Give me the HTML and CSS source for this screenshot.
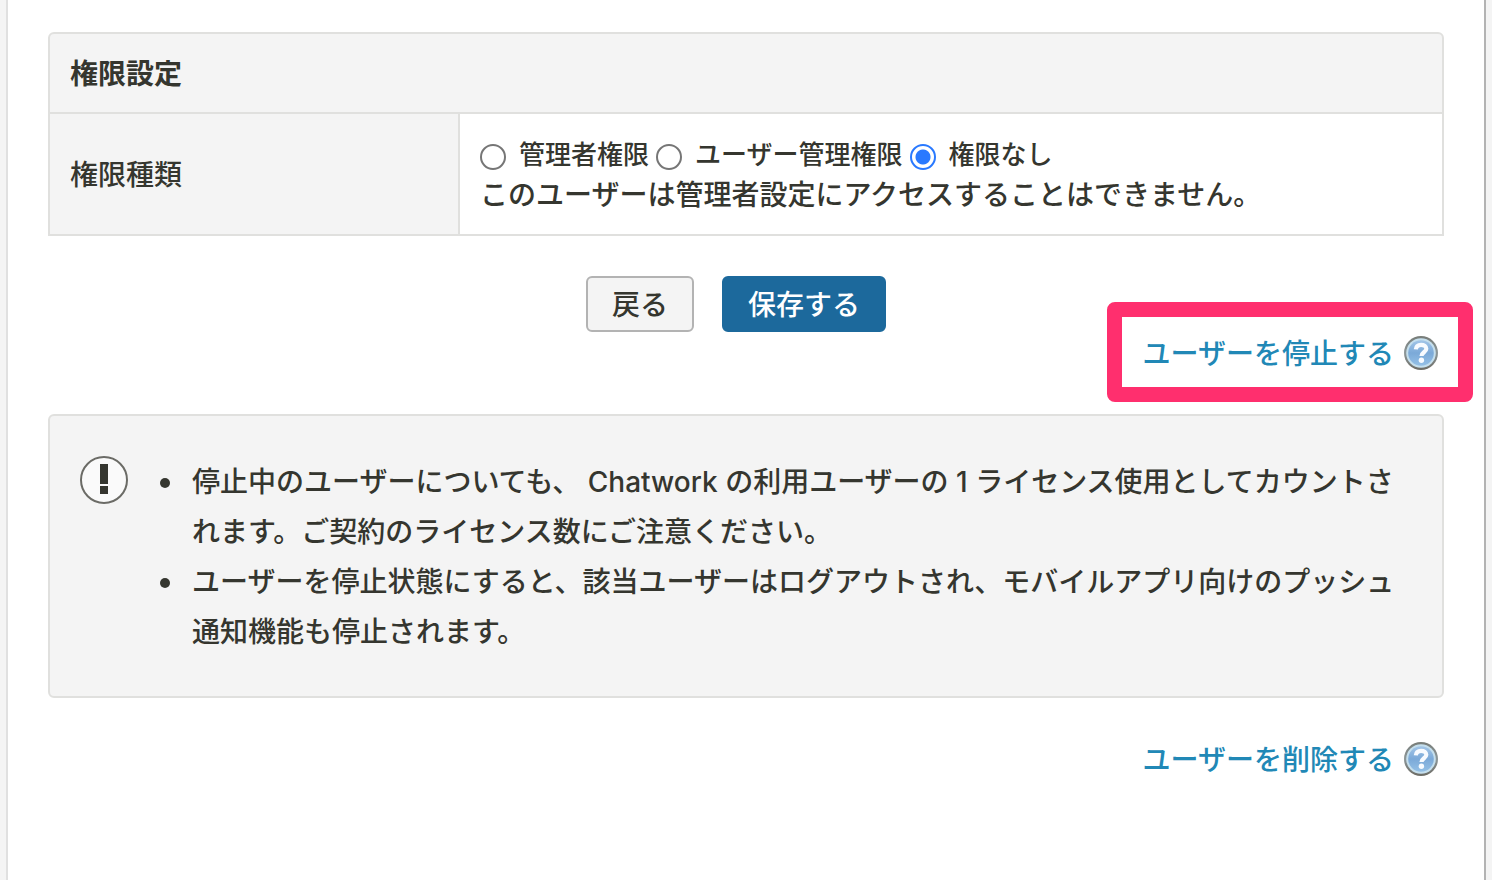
FILE: index.html
```html
<!DOCTYPE html>
<html lang="ja">
<head>
<meta charset="utf-8">
<meta name="viewport" content="width=device-width, initial-scale=1">
<title>権限設定</title>
<link rel="stylesheet" href="styles.css">
</head>
<body>
<svg class="sprite" aria-hidden="true">
  <defs>
    <linearGradient id="help-fill" x1="0" y1="0" x2="0" y2="1">
      <stop offset="0" stop-color="#a3c6e8"/>
      <stop offset="0.5" stop-color="#7ba9d8"/>
      <stop offset="1" stop-color="#94c0e6"/>
    </linearGradient>
    <linearGradient id="help-rim" x1="0" y1="0" x2="0" y2="1">
      <stop offset="0" stop-color="#777c78"/>
      <stop offset="0.5" stop-color="#8d9799"/>
      <stop offset="1" stop-color="#6c6b64"/>
    </linearGradient>
    <symbol id="help" viewBox="0 0 34 34">
      <circle cx="17" cy="17" r="17" fill="url(#help-rim)"/>
      <circle cx="17" cy="17" r="14.8" fill="#c5dfed"/>
      <circle cx="17" cy="17" r="12.8" fill="url(#help-fill)"/>
      <path d="M11.800 13.400c.3-3.200 2.400-4.600 5.300-4.600 3.100 0 5.200 1.500 5.200 4 0 3.400-4.800 3.600-4.800 7.200" fill="none" stroke="#f8fbff" stroke-width="4.200"/>
      <circle cx="17.400" cy="24.300" r="2.700" fill="#f8fbff"/>
    </symbol>
  </defs>
</svg>
<main class="panel">
  <form class="form">
    <table class="settings">
      <thead>
        <tr><th class="settings-title" colspan="2" scope="colgroup">権限設定</th></tr>
      </thead>
      <tbody>
        <tr>
          <th class="settings-label" scope="row">権限種類</th>
          <td class="settings-value">
            <div class="options">
              <label class="option"><input class="radio" type="radio" name="role">管理者権限</label>
              <label class="option"><input class="radio" type="radio" name="role">ユーザー管理権限</label>
              <label class="option"><input class="radio" type="radio" name="role" checked>権限なし</label>
            </div>
            <p class="description">このユーザーは管理者設定にアクセスすることはできません。</p>
          </td>
        </tr>
      </tbody>
    </table>
    <div class="buttons">
      <button class="button" type="button">戻る</button>
      <button class="button button-primary" type="submit">保存する</button>
    </div>
  </form>
  <div class="action">
    <div class="action-body">
      <a class="link" href="#stop">ユーザーを停止する</a>
      <svg class="help" role="img" aria-label="ヘルプ"><use href="#help"/></svg>
      <span class="highlight"></span>
    </div>
  </div>
  <section class="note">
    <svg class="note-icon" viewBox="0 0 48 48" aria-hidden="true">
      <circle cx="24" cy="24" r="23" fill="#fafafa" stroke="#6b6b66" stroke-width="2"/>
      <path d="M20 8h8v20h-8zM20 30h8v8h-8z" fill="#35362f"/>
    </svg>
    <ul class="note-list">
      <li class="note-item">停止中のユーザーについても、 Chatwork の利用ユーザーの 1 ライセンス使用としてカウントされます。ご契約のライセンス数にご注意ください。</li>
      <li class="note-item">ユーザーを停止状態にすると、該当ユーザーはログアウトされ、モバイルアプリ向けのプッシュ通知機能も停止されます。</li>
    </ul>
  </section>
  <div class="action action-delete">
    <div class="action-body">
      <a class="link" href="#delete">ユーザーを削除する</a>
      <svg class="help" role="img" aria-label="ヘルプ"><use href="#help"/></svg>
    </div>
  </div>
</main>
</body>
</html>
```
FILE: styles.css
```css
* { box-sizing: border-box; }

body {
  margin: 0;
  background: #f4f4f4;
  color: #35362f;
  font-family: Inter, "Noto Sans CJK JP", sans-serif;
  font-size: 28px;
  font-weight: 500;
  line-height: 40px;
}

.sprite {
  position: absolute;
  width: 0;
  height: 0;
}

.panel {
  min-height: 100vh;
  margin: 0 6px;
  padding: 32px 40px;
  background: #fff;
  border-left: 2px solid #e0e0e0;
  border-right: 2px solid #b3b3b3;
}

.settings {
  width: 100%;
  border: 2px solid #e0e0de;
  border-radius: 6px 6px 0 0;
  border-spacing: 0;
  background: #f4f4f4;
}

.settings th {
  padding: 20px 20px 18px;
  text-align: left;
}

.settings .settings-title { border-bottom: 2px solid #e0e0de; }

.settings .settings-label {
  width: 410px;
  border-right: 2px solid #e0e0de;
  font-weight: 500;
}

.settings-value {
  padding: 21px 20px 19px;
  background: #fff;
}

.options {
  display: flex;
  flex-wrap: wrap;
  gap: 0 7px;
  font-size: 26px;
}

.option {
  display: flex;
  align-items: center;
  gap: 13px;
}

.radio {
  appearance: none;
  width: 26px;
  height: 26px;
  margin: 4px 0 0;
  border: 2px solid #767676;
  border-radius: 50%;
  background: #fff;
}

.radio:checked {
  border-color: #2979ff;
  background: radial-gradient(circle, #2979ff 7px, #fff 8px);
}

.description { margin: 0; }

.buttons {
  display: flex;
  justify-content: center;
  gap: 28px;
  margin: 40px 20px 0 0;
}

.button {
  padding: 7px 24px 5px;
  border: 2px solid #b3b3b3;
  border-radius: 6px;
  background: #f4f4f4;
  color: inherit;
  font: inherit;
}

.button-primary {
  border-color: #1c699c;
  background: #1c699c;
  color: #fff;
}

.action {
  display: flex;
  justify-content: flex-end;
  padding-right: 6px;
}

.action-delete { margin-top: 40px; }

.action-body {
  position: relative;
  display: flex;
  align-items: center;
  gap: 10px;
}

.link {
  padding-top: 2px;
  color: #2188b6;
  text-decoration: none;
}

.help {
  width: 34px;
  height: 34px;
}

.highlight {
  position: absolute;
  inset: -30px -35px -28px -36px;
  border: 15px solid #ff2f6e;
  border-radius: 8px;
  pointer-events: none;
}

.note {
  display: flex;
  gap: 32px;
  margin-top: 40px;
  padding: 40px 30px 39px;
  border: 2px solid #e0e0de;
  border-radius: 6px;
  background: #f4f4f4;
}

.note-icon {
  flex: none;
  width: 48px;
  height: 48px;
}

.note-list {
  flex: 1;
  margin: 0;
  padding: 1px 0 0;
  line-height: 50px;
  list-style: none;
}

.note-item {
  display: flex;
  gap: 22px;
}

.note-item::before {
  content: "";
  flex: none;
  width: 10px;
  height: 10px;
  margin-top: 21px;
  border-radius: 50%;
  background: #35362f;
}
```
